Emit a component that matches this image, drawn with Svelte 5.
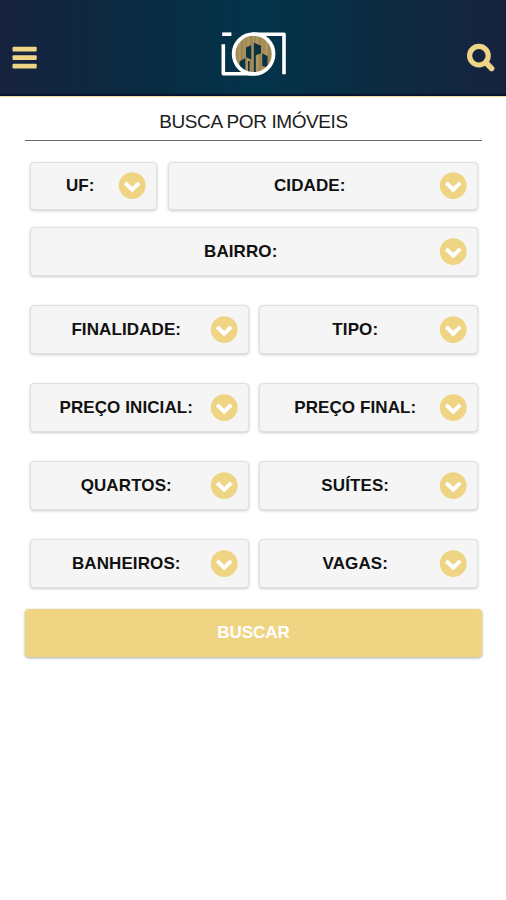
<script>
  const rows = [
    { top: 21, height: 48, fields: [{ label: 'UF:', width: 127 }, { label: 'CIDADE:', width: 310 }] },
    { top: 17, height: 49, fields: [{ label: 'BAIRRO:', width: 448 }] },
    { top: 29, height: 49, fields: [{ label: 'FINALIDADE:', width: 219 }, { label: 'TIPO:', width: 219 }] },
    { top: 29, height: 49, fields: [{ label: 'PREÇO INICIAL:', width: 219 }, { label: 'PREÇO FINAL:', width: 219 }] },
    { top: 29, height: 49, fields: [{ label: 'QUARTOS:', width: 219 }, { label: 'SUÍTES:', width: 219 }] },
    { top: 29, height: 49, fields: [{ label: 'BANHEIROS:', width: 219 }, { label: 'VAGAS:', width: 219 }] }
  ];
</script>

<div class="screen">
  <header>
    <button class="icon menu" aria-label="Menu">
      <svg width="26" height="24" viewBox="0 0 26 24">
        <g fill="#f0d586">
          <rect x="0.5" y="0.7" width="24.2" height="4.8" rx="1" />
          <rect x="0.5" y="9.2" width="24.2" height="4.8" rx="1" />
          <rect x="0.5" y="17.8" width="24.2" height="4.8" rx="1" />
        </g>
      </svg>
    </button>
    <svg class="logo" width="68" height="48" viewBox="0 0 68 48">
      <defs>
        <linearGradient id="wood" x1="0" x2="9" y1="0" y2="0" gradientUnits="userSpaceOnUse" spreadMethod="repeat">
          <stop offset="0" stop-color="#a08855" />
          <stop offset=".3" stop-color="#b39b66" />
          <stop offset=".55" stop-color="#97814f" />
          <stop offset=".8" stop-color="#ad955e" />
          <stop offset="1" stop-color="#a08855" />
        </linearGradient>
        <clipPath id="lens"><circle cx="34.6" cy="25" r="19" /></clipPath>
      </defs>
      <circle cx="34.6" cy="25" r="20" fill="url(#wood)" />
      <g clip-path="url(#lens)" fill="#0b3344">
        <path d="M27 18.6l5.2-2.4v14.2l-5.2-2.2z" />
        <path d="M34.8 13.6l7.2 3.2v7.4l-5.2 2v18h-2z" />
        <path d="M20.5 32.6l5.8-3.6v16h-5.8zM29 32h1.6v12h-1.6zM43.2 24.4l5.4 2.6v11.5l-5.4-1.8z" />
      </g>
      <g fill="none" stroke="#fff" stroke-width="3.6">
        <path d="M3.2 5.2h9.2" />
        <path d="M4.3 15.2V44.8H36" stroke-linejoin="round" />
        <path d="M33 5.2h32v40" stroke-linejoin="round" />
        <circle cx="34.6" cy="25" r="20" />
      </g>
    </svg>
    <button class="icon search" aria-label="Buscar">
      <svg width="30" height="30" viewBox="0 0 30 30" fill="none" stroke="#f0d586">
        <circle cx="12.9" cy="12.7" r="9.3" stroke-width="5.2" />
        <path d="M19.8 19.6l5.8 5.8" stroke-width="5.6" stroke-linecap="round" />
      </svg>
    </button>
  </header>

  <main>
    <h1>BUSCA POR IMÓVEIS</h1>
    <form>
      {#each rows as row}
        <div class="row" style="margin-top: {row.top}px; height: {row.height}px">
          {#each row.fields as field}
            <button type="button" class="field" style="width: {field.width}px">
              <span>{field.label}</span>
              <svg width="28" height="28" viewBox="0 0 28 28">
                <circle cx="14.2" cy="13.6" r="13.4" fill="#efd483" />
                <path d="M7.2 10.8l7 6.9 7-6.9" fill="none" stroke="#fff" stroke-width="4" />
              </svg>
            </button>
          {/each}
        </div>
      {/each}
      <button type="button" class="submit">BUSCAR</button>
    </form>
  </main>
</div>

<style>
  .screen {
    width: 506px;
    height: 900px;
    overflow: hidden;
    background: #fff;
    font-family: "Liberation Sans", Arial, sans-serif;
  }
  button {
    border: 0;
    padding: 0;
    font-family: inherit;
  }
  svg {
    display: block;
  }
  header {
    box-sizing: border-box;
    height: 97px;
    padding: 0 10px 0 12px;
    display: grid;
    grid-template-columns: 1fr 68px 1fr;
    align-items: start;
    background: linear-gradient(90deg, #17233f 0%, #082c42 30%, #03344a 50%, #0a2d43 70%, #17233f 100%);
    border-bottom: 1px solid #eed89b;
    box-shadow: inset 0 -2px 1px #07132e;
  }
  .icon {
    background: none;
  }
  .menu {
    margin-top: 46px;
    justify-self: start;
  }
  .logo {
    margin-top: 29px;
    margin-left: -1px;
  }
  .search {
    margin-top: 43px;
    justify-self: end;
  }
  main {
    padding: 0 24px 0 25px;
  }
  h1 {
    box-sizing: border-box;
    height: 44px;
    margin: 0;
    padding-top: 1px;
    border-bottom: 1px solid #666;
    text-align: center;
    font-size: 19px;
    font-weight: 400;
    line-height: 47px;
    letter-spacing: -0.4px;
    color: #1c1c1c;
  }
  form {
    display: flex;
    flex-direction: column;
  }
  .row {
    display: flex;
    justify-content: space-between;
    padding: 0 4px 0 5px;
  }
  .field {
    box-sizing: border-box;
    display: flex;
    align-items: center;
    height: 100%;
    padding-right: 10px;
    border: 1px solid #dedfe1;
    border-radius: 4px;
    background: #f5f5f5;
    box-shadow: 0 1px 3px rgba(0, 0, 0, 0.2);
    color: #111;
    font-size: 17px;
    font-weight: 700;
    letter-spacing: 0.1px;
  }
  .field span {
    flex: 1;
    padding-left: 11.5px;
    text-align: center;
    white-space: nowrap;
  }
  .field svg {
    flex: none;
  }
  .submit {
    height: 48px;
    margin-top: 21px;
    border-radius: 4px;
    background: #efd483;
    box-shadow: 0 1px 3px rgba(0, 0, 0, 0.35);
    color: #fff;
    font-size: 17px;
    font-weight: 700;
  }
</style>
